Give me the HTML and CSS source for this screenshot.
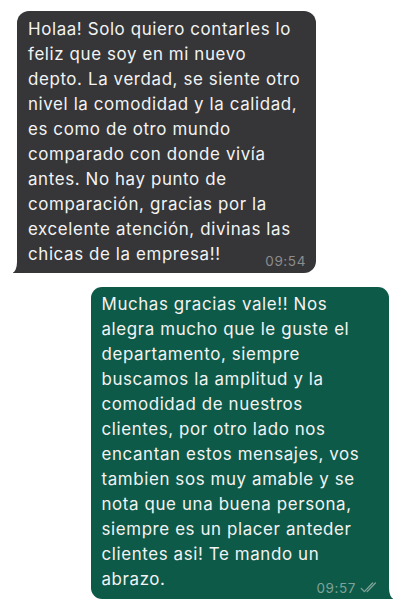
FILE: index.html
```html
<!DOCTYPE html>
<html lang="es">
<head>
<meta charset="utf-8">
<title>Chat</title>
<link rel="stylesheet" href="styles.css">
</head>
<body>
<div class="chat">
  <div class="bubble in">
    <p class="text">Holaa! Solo quiero contarles lo<br>feliz que soy en mi nuevo<br>depto. La verdad, se siente otro<br>nivel la comodidad y la calidad,<br>es como de otro mundo<br>comparado con donde vivía<br>antes. No hay punto de<br>comparación, gracias por la<br>excelente atención, divinas las<br>chicas de la empresa!!<span class="meta"><span class="time">09:54</span></span></p>
  </div>
  <div class="bubble out">
    <p class="text">Muchas gracias vale!! Nos<br>alegra mucho que le guste el<br>departamento, siempre<br>buscamos la amplitud y la<br>comodidad de nuestros<br>clientes, por otro lado nos<br>encantan estos mensajes, vos<br>tambien sos muy amable y se<br>nota que una buena persona,<br>siempre es un placer anteder<br>clientes asi! Te mando un<br>abrazo.<span class="meta"><span class="time">09:57</span><svg class="ticks" width="20" height="11" viewBox="0 0 20 11"><path d="M1.2 6.4 L4.4 9.6 L12.6 1 M7.2 9.6 L15.4 1" fill="none" stroke="currentColor" stroke-width="1.3" stroke-linecap="round" stroke-linejoin="round"/></svg></span></p>
  </div>
</div>
</body>
</html>
```
FILE: styles.css
```css
* { box-sizing: border-box; }
html, body { margin: 0; padding: 0; background: #ffffff; }
body { font-family: Inter, "Liberation Sans", sans-serif; }
.chat {
  display: flex;
  flex-direction: column;
  gap: 14px;
  padding: 11px 17px 0 17px;
}
.bubble {
  position: relative;
  color: #f3f3f3;
}
.bubble::before,
.bubble::after {
  content: "";
  position: absolute;
  bottom: 0;
  height: 16px;
}
.in {
  align-self: flex-start;
  width: 299px;
  background: #363638;
  border-radius: 12px 12px 12px 0;
  padding: 6px 10px 4.5px 11px;
}
.in::before {
  left: -4px;
  width: 16px;
  background: #363638;
  border-bottom-right-radius: 12px 10px;
}
.in::after {
  left: -14px;
  width: 14px;
  background: #ffffff;
  border-bottom-right-radius: 5px 11px;
}
.out {
  align-self: flex-end;
  width: 298px;
  background: #0e5a49;
  border-radius: 11px 11px 0 11px;
  padding: 5px 9px 4.5px 10.5px;
}
.out::before {
  right: -4px;
  width: 16px;
  background: #0e5a49;
  border-bottom-left-radius: 12px 10px;
}
.out::after {
  right: -14px;
  width: 14px;
  background: #ffffff;
  border-bottom-left-radius: 5px 11px;
}
.text {
  position: relative;
  z-index: 1;
  margin: 0;
  font-size: 16.9px;
  letter-spacing: 0.62px;
  line-height: 25px;
  white-space: nowrap;
  display: flow-root;
}
.meta {
  float: right;
  display: flex;
  align-items: flex-end;
  gap: 4px;
  font-size: 13.5px;
  letter-spacing: 0.6px;
  line-height: 14px;
  margin-top: 12px;
  margin-left: 12px;
}
.in .time { color: #8c8c8e; }
.out .meta { margin-top: 14px; color: #7fa398; }
.ticks { display: block; margin-bottom: 2px; }
```
